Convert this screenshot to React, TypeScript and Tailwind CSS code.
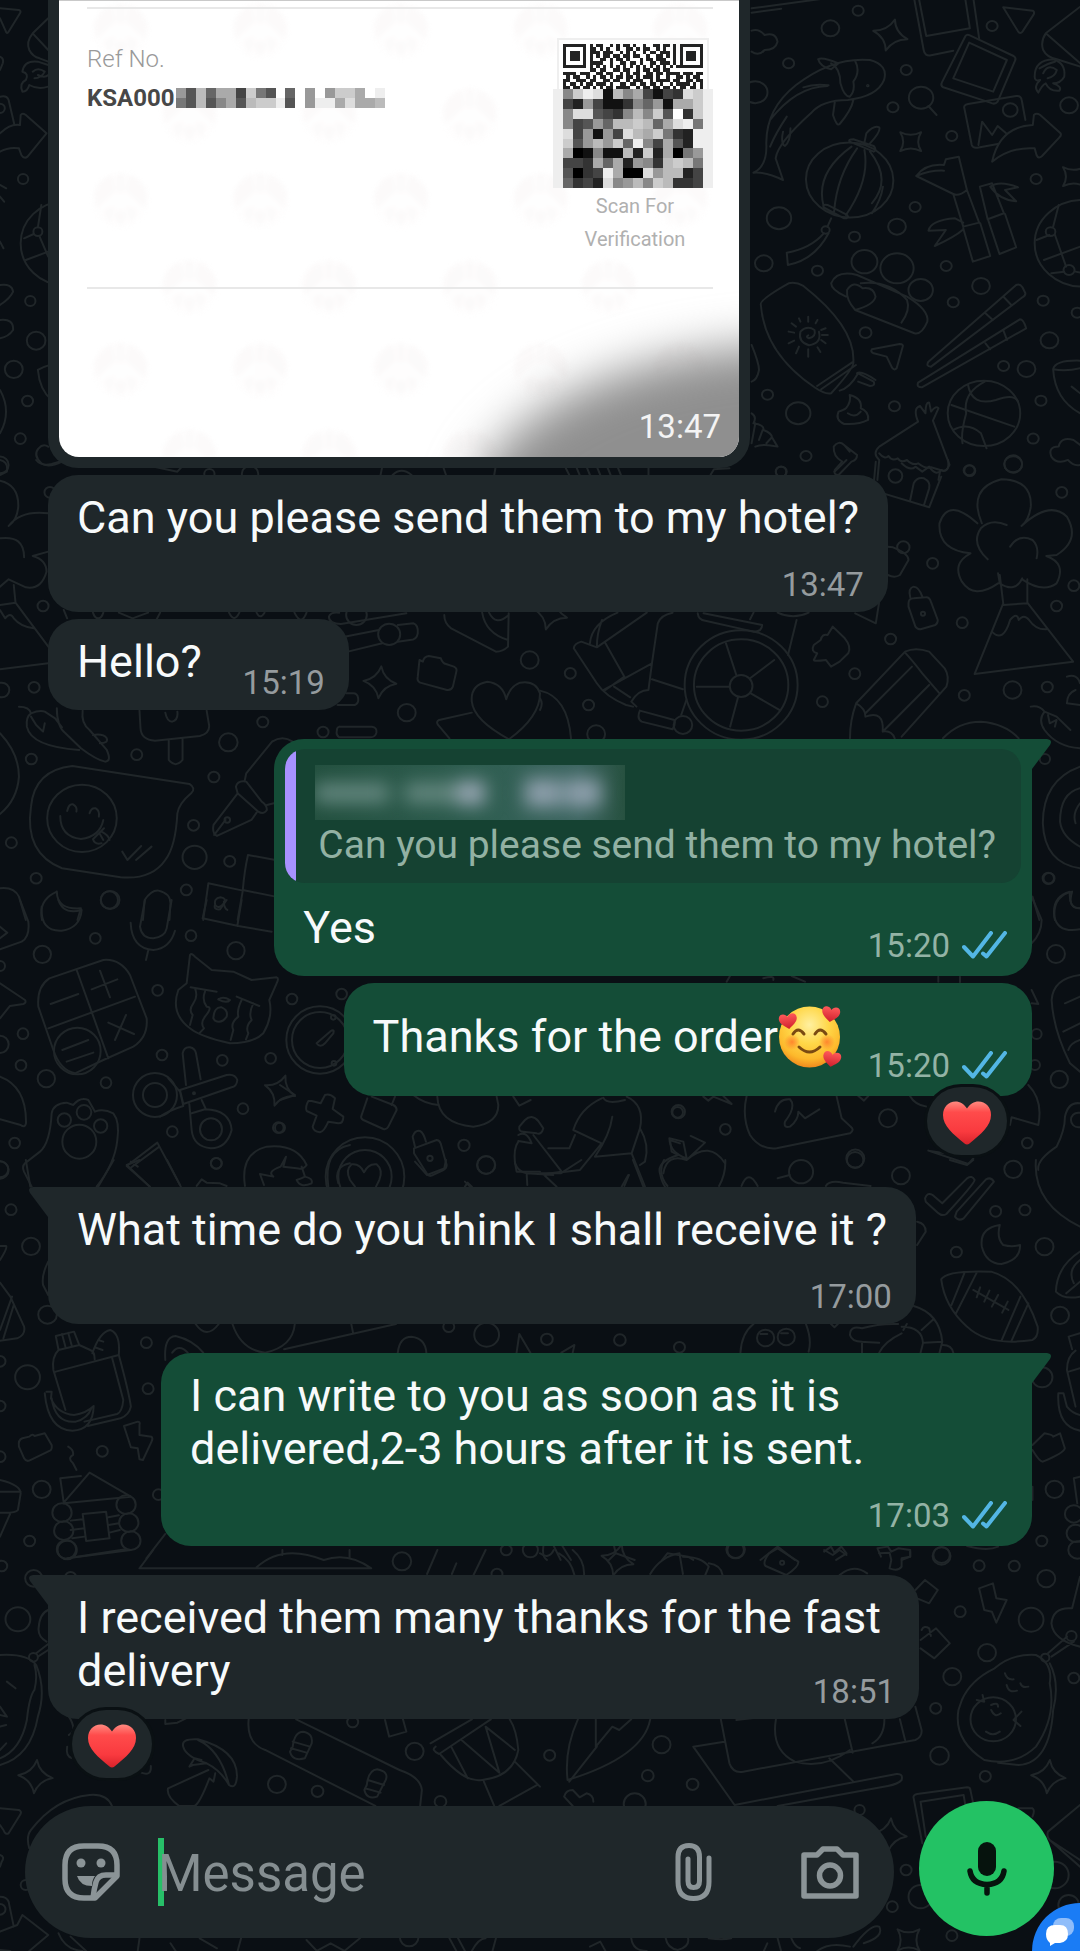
import { type ReactNode } from "react";

/* ------------------------------------------------------------------ */
/* Wallpaper                                                           */
/* ------------------------------------------------------------------ */

type Patch = {
  at: [number, number];
  scale: [number, number];
  circles: [number, number, number][];
  stars?: [number, number, number, number][];
  paths: string[];
};

const PATCHES: Patch[] = [
  {
    at: [0, 0],
    scale: [0.3444, 0.3333],
    circles: [
      [0, 325, 14], [67, 537, 15], [88, 903, 15], [105, 1022, 27], [40, 1108, 26], [80, 1203, 16],
      [59, 1316, 16], [185, 730, 125], [110, 695, 13], [0, 1395, 25],
    ],
    paths: [
      "M0 25L55 30Q62 32 58 40L25 95Q20 105 16 92L0 55",
      "M140 55L95 100L140 150M95 100Q75 125 85 150Q95 170 115 175L140 185",
      "M65 215Q70 180 110 185L140 195M65 215Q85 220 75 240Q55 250 65 275Q80 275 85 255Q110 270 140 260M95 215Q110 200 130 215Q120 235 100 235M110 225Q130 235 140 225",
      "M0 400Q30 370 58 375L60 345Q65 338 75 345L135 400L80 470Q70 478 62 465L55 445Q25 440 0 455",
      "M0 290Q20 285 25 300L42 375M0 170Q12 175 8 190L0 210M0 555L18 565M0 590L12 605M0 725L10 745",
      "M110 682L120 615M98 702L70 715M75 780L140 755M115 710L140 770",
      "M0 855Q35 850 38 875Q30 895 0 915M0 960Q40 955 38 990Q25 1010 0 1015",
      "M110 1110Q140 1090 200 1085M110 1110Q115 1170 150 1200M0 1170Q35 1235 0 1300",
      "M120 1390Q95 1365 112 1345Q125 1330 140 1340M120 1390Q140 1405 180 1385",
    ],
  },
  {
    at: [500, 0],
    scale: [0.37, 0.3333],
    circles: [
      [968, 32, 15], [893, 85, 24], [780, 190, 15], [1098, 210, 15], [1330, 78, 15], [1062, 322, 15],
      [1221, 408, 15], [1538, 316, 24], [1449, 537, 15], [754, 655, 33], [1122, 621, 15], [1073, 680, 24],
      [958, 710, 15], [713, 790, 24], [858, 812, 15], [1206, 798, 15], [985, 785, 35], [1073, 805, 45],
      [1137, 870, 33], [1300, 858, 24], [1225, 907, 15], [1468, 902, 15], [1560, 938, 15], [988, 998, 16],
      [1485, 1021, 24], [1361, 1098, 15], [1423, 1107, 24], [723, 1184, 15], [806, 1240, 33],
      [1066, 1219, 15], [1462, 1202, 15], [1441, 1316, 15], [827, 1368, 15], [1387, 1393, 24],
      [1268, 1411, 15], [760, 1415, 15], [690, 277, 33], [1138, 293, 33], [1379, 330, 20],
      [1308, 1240, 98], [1575, 730, 130], [1488, 695, 13], [1538, 810, 15], [880, 690, 11], [994, 257, 2],
    ],
    stars: [[1055, 105, 48, 15], [1110, 425, 40, 45], [1550, 530, 40, 45]],
    paths: [
      "M680 25L880 -5M680 38L760 26",
      "M680 92Q700 85 715 105Q745 95 750 125Q745 150 715 150Q700 170 680 155",
      "M1120 0L1145 150Q1148 170 1165 166L1225 152M1280 0L1295 115M1133 0L1152 108L1270 85L1258 0",
      "M1258 108Q1262 102 1270 106L1388 168Q1396 174 1392 182L1345 305Q1338 315 1325 308L1198 262Q1190 256 1194 248ZM1268 128L1370 180L1333 275L1225 235Z",
      "M1360 22L1440 32Q1446 36 1442 44L1412 95Q1406 104 1400 94Z",
      "M1568 20L1475 100Q1460 125 1468 150Q1478 172 1505 178L1568 200M1475 100L1568 190",
      "M1445 230Q1445 180 1495 178Q1530 190 1525 230Q1515 250 1495 250Q1520 260 1512 272Q1485 275 1475 250Q1465 255 1455 278Q1440 260 1460 240Q1445 245 1445 230M1468 220Q1480 190 1505 210Q1500 230 1480 235M1458 205Q1480 190 1500 185",
      "M685 518Q720 500 720 440Q715 330 800 255Q900 170 1000 180Q1050 195 1038 240Q1020 290 940 300Q870 300 840 340Q750 430 745 475L765 540Q720 515 685 518ZM860 178Q870 170 915 190L895 208Q865 200 860 178M895 190Q920 205 920 250Q930 290 945 290Q960 275 955 245Q975 215 960 183M730 360Q800 260 885 258M820 262Q850 250 888 256M775 350Q745 400 730 440M905 305L900 345Q910 380 918 372Q950 330 955 300M765 395Q758 430 770 438Q785 425 785 385",
      "M1158 318L1180 345",
      "M1255 325Q1252 315 1265 312L1395 288Q1408 286 1410 300L1420 360M1255 325L1275 435Q1278 445 1290 443L1345 432M1293 435L1303 365L1330 405L1345 378L1368 400",
      "M1330 485Q1350 380 1440 375L1443 345Q1450 338 1460 345L1515 400Q1518 406 1512 412L1465 468Q1455 478 1450 465L1445 445Q1380 440 1330 485Z",
      "M945 540m-118 0a118 112 10 1 0 236 0a118 112 10 1 0 -236 0M950 440Q850 520 875 620M965 445Q910 530 903 635M985 450Q1000 540 935 645M1000 455Q1060 540 1005 610M1005 640Q1030 600 1035 560M945 425L1010 455Q1020 450 1010 438L955 418Q940 418 945 425M875 622L930 655Q945 655 938 645L885 615Q870 612 875 622M985 428L990 400Q1010 375 1025 382Q1030 395 1000 430M895 655L885 680M875 700Q840 745 775 758L778 795Q850 780 888 700",
      "M1125 528Q1150 490 1200 495L1205 478L1240 470L1262 570Q1240 590 1225 582ZM1125 528Q1165 510 1200 512M1225 582L1252 680L1295 668L1262 570M1252 685L1278 785L1325 768L1298 670M1252 668L1230 655Q1165 660 1158 692L1205 690L1175 738Q1230 710 1250 690M1297 560L1330 550L1362 640L1318 658ZM1320 662L1350 762L1395 742L1365 642M1325 560Q1350 540 1400 562L1365 570L1395 604Q1350 600 1325 560",
      "M895 850Q910 810 965 825L1100 890Q1160 930 1155 965Q1140 1005 1120 1000L960 930M895 850Q895 870 935 890M960 930Q935 900 938 870Q955 840 980 865Q1010 860 1015 890Q1010 915 960 930M1100 900Q1110 930 1085 968M975 850Q1050 840 1100 900",
      "M705 915Q700 900 780 850Q800 845 820 858Q960 980 955 1085Q960 1100 895 1180Q880 1185 850 1162Q715 1060 705 915ZM857 1158L955 1085M868 1168L962 1095M918 1172Q945 1165 968 1120L1010 1145Q1015 1158 1000 1158L968 1145M965 1120Q975 1110 1015 1140",
      "M833 1006Q825 1010 835 1015Q855 1010 850 990Q830 975 812 995Q805 1025 835 1036Q870 1030 862 995M833 950L833 965M858 960L853 970M880 985L868 990M870 1005L886 1005M868 1020L880 1030M858 1042L866 1056M833 1048L833 1070M808 1040L800 1060M795 1022L780 1030M780 995L795 998M788 970L800 980M808 955L812 965",
      "M1395 855Q1405 850 1412 862L1420 880Q1420 888 1412 892L1165 1100Q1150 1100 1158 1085ZM1312 940L1332 960M1362 892L1382 915M1405 958Q1415 958 1422 985L1140 1162Q1125 1162 1130 1148ZM1312 1030L1325 1048M1360 990L1370 1020",
      "M1005 1048L1080 1032Q1092 1032 1088 1042L1072 1105Q1066 1112 1060 1104L1045 1070L1010 1060Q1000 1055 1005 1048Z",
      "M1265 1155Q1275 1220 1340 1200Q1390 1180 1400 1205M1220 1215L1390 1280M1310 1145Q1250 1180 1260 1240Q1245 1300 1250 1330M1225 1290Q1265 1265 1300 1300L1315 1345",
      "M945 1185Q980 1195 975 1225Q998 1235 995 1260Q970 1275 930 1272Q905 1260 915 1235Q930 1230 935 1225Q950 1205 945 1185M975 1235Q960 1255 940 1240",
      "M1020 1440L1025 1380Q1005 1360 1025 1340L1130 1265Q1115 1225 1135 1218L1150 1240Q1150 1205 1160 1208L1165 1235Q1180 1215 1185 1225L1170 1262L1215 1395Q1205 1420 1190 1410L1185 1440M1025 1360Q1040 1380 1050 1368Q1060 1385 1075 1375Q1085 1390 1100 1380Q1115 1398 1130 1390Q1150 1408 1165 1402L1190 1410",
      "M1450 720L1485 705M1495 680L1510 615M1500 705L1530 800M1470 780L1568 740M1490 820L1525 815M1555 815L1568 818",
      "M1495 1108Q1500 1080 1568 1082M1495 1108Q1500 1200 1568 1240M1495 1108Q1530 1115 1568 1105M1545 1160L1568 1180",
      "M1490 1370Q1480 1340 1510 1340Q1515 1310 1550 1320L1568 1335M1490 1370Q1505 1395 1535 1380Q1550 1400 1568 1395",
      "M680 1240Q695 1250 685 1270Q715 1275 712 1290Q735 1300 735 1312L750 1340Q710 1330 690 1340M690 1270L680 1330M710 1290L700 1320M735 1312L720 1330M680 1035Q700 1090 700 1110Q695 1140 680 1145",
      "M902 1340Q915 1320 930 1335L965 1365Q965 1380 950 1385L915 1425Q900 1425 905 1410L925 1385Q900 1370 902 1340M930 1335L945 1355",
    ],
  },
  {
    at: [0, 460],
    scale: [0.3444, 0.3333],
    circles: [
      [145, 97, 16], [125, 438, 16], [5, 690, 22], [99, 682, 16], [1130, 523, 32], [1035, 465, 30],
      [1181, 758, 26], [1538, 600, 26], [763, 786, 16], [663, 847, 27], [938, 816, 16], [397, 884, 16],
      [91, 897, 16], [621, 951, 16], [562, 1096, 16], [33, 1148, 16], [565, 1192, 35], [667, 1204, 16],
      [105, 1255, 16], [320, 1320, 27], [541, 1290, 16], [238, 1075, 101], [608, 42, 15], [726, 42, 24], [660, 1080, 8],
    ],
    stars: [[1103, 667, 48, 5]],
    paths: [
      "M0 0Q25 5 20 35L0 45M105 0Q120 20 150 12L190 0M380 5L515 35L530 18M1110 20L1105 45M1140 45Q1165 20 1195 45M1285 15L1295 45M1440 15L1435 45",
      "M0 62Q55 75 53 140Q50 180 25 198M25 198Q60 150 140 160M0 235Q70 225 70 292M95 288Q135 300 135 335Q120 390 75 382L25 358L0 380M95 288L140 275M40 375L45 428L155 580M45 428L0 435M0 450L15 475Q30 455 40 475Q60 500 98 505",
      "M0 628L140 610M185 450L195 475M270 458Q275 475 285 475Q295 475 300 458M345 458L385 475L430 458M465 458L455 478M665 458Q680 490 695 458M745 458Q755 480 768 458M855 458Q875 500 890 458",
      "M955 470Q960 455 985 458M955 470Q955 490 990 492L1180 460M1000 530L1100 510M1010 575L1110 550M1155 495L1200 490Q1215 495 1213 520Q1210 540 1190 540L1155 545",
      "M1290 465Q1290 490 1310 505L1440 575Q1460 575 1475 560L1477 460M1400 458Q1410 520 1475 540M1420 458Q1440 500 1477 465",
      "M1218 600L1228 605Q1230 590 1245 588L1280 595Q1285 610 1295 612L1318 620Q1328 625 1325 635L1315 680Q1310 692 1298 690L1220 668Q1210 662 1213 650Z",
      "M1470 718Q1460 670 1415 665Q1365 675 1370 725Q1375 780 1478 838Q1568 770 1568 700Q1555 660 1510 668Q1480 680 1470 718ZM1370 758L1275 780Q1265 785 1272 795L1305 835",
      "M980 735L1030 735Q1042 730 1040 715Q1038 700 1025 700L1005 700M985 800L1080 800Q1095 802 1093 818Q1090 832 1075 832L985 832Q975 825 978 812Q978 802 985 800",
      "M240 752Q235 790 260 810L310 870Q325 905 305 905Q280 900 235 865L190 820Q165 800 165 745M55 740Q85 740 90 760Q75 770 78 800Q90 860 230 870M90 760Q115 750 130 755L160 775L180 802M105 795L125 815L130 790M90 770L105 795M270 825Q300 820 310 835Q315 850 290 850",
      "M405 752L408 805Q410 840 450 842L580 828Q610 820 607 795L600 752M480 758Q485 785 500 785Q518 780 515 755M490 842L490 900Q510 925 530 900L530 838",
      "M90 1040Q100 930 210 918L550 972Q570 985 555 1000Q520 1030 515 1060Q510 1160 480 1200Q440 1260 350 1252L180 1225Q70 1180 90 1040ZM175 1068Q175 1130 235 1137Q290 1130 300 1080M195 1053Q200 1030 212 1033Q225 1040 222 1055M260 1060Q265 1042 278 1045Q290 1052 287 1070M270 1138L302 1105M270 1138Q275 1155 295 1150M295 1115Q315 1125 318 1140M290 1122L300 1140M355 1175L370 1200L410 1158M395 1200L440 1160",
      "M790 845Q820 825 850 845M790 845L715 940L710 965M715 965Q690 960 685 980L690 1000L750 1055Q765 1065 775 1050Q775 1035 760 1025ZM690 1000L620 1095Q615 1120 630 1128L730 1080L745 1058M655 1080L622 1125M775 1035L795 1030",
      "M800 1200L720 1185Q710 1230 705 1290L800 1310M605 1270L705 1292L690 1380M605 1270L590 1380M625 1335Q620 1315 640 1312Q660 1315 650 1330Q635 1350 625 1335M650 1325Q650 1345 660 1350",
      "M0 820Q55 880 55 950Q50 1020 0 1062M0 1285Q40 1280 55 1310L75 1380M165 1295Q165 1350 235 1345L225 1380M165 1295Q110 1320 122 1380M415 1380L420 1320Q440 1290 460 1292Q495 1300 495 1330L492 1380",
    ],
  },
  {
    at: [540, 460],
    scale: [0.3444, 0.3333],
    circles: [
      [1032, 48, 20], [1248, 32, 16], [1374, 12, 26], [1515, 97, 16], [1140, 310, 16], [1226, 488, 16],
      [1500, 438, 16], [1550, 377, 16], [1018, 537, 16], [914, 641, 16], [1232, 706, 16], [1372, 690, 26],
      [1473, 681, 16], [820, 725, 16], [141, 735, 16], [88, 640, 16], [163, 822, 26], [1112, 461, 6],
      [584, 675, 164], [584, 675, 137], [584, 678, 33], [415, 795, 27], [1055, 262, 18], [700, 35, 15],
      [1466, 897, 15], [1478, 1255, 16],
    ],
    stars: [[30, 460, 50, 15]],
    paths: [
      "M975 5L970 60M970 92L1130 142L1165 50M1075 120L1085 70Q1095 50 1115 55Q1135 65 1130 85L1115 135M855 35L890 0M1050 10Q1075 35 1090 20L1110 35L1130 20Q1150 50 1165 30Q1190 40 1185 0",
      "M495 45L505 28L550 25M75 25L85 45M105 20L115 45M135 20L145 45M165 20L175 45M195 20L205 45M225 20L235 45M315 20V45",
      "M1270 190Q1185 110 1160 190Q1155 270 1250 280Q1195 310 1225 365Q1260 420 1330 370M1283 190Q1240 85 1340 58Q1430 60 1425 140Q1420 180 1398 198Q1480 120 1530 170Q1570 240 1500 285L1470 288Q1530 310 1500 370Q1460 400 1400 358M1300 298Q1250 250 1280 205Q1310 175 1355 195M1365 260Q1390 220 1430 240Q1450 260 1442 295M1335 345L1345 430L1262 642L1548 605L1415 428V358M1330 340L1335 370Q1380 400 1400 355M1345 435L1415 430M1312 515Q1345 550 1365 480Q1385 455 1390 480Q1405 460 1420 480Q1440 510 1470 508",
      "M1010 260L1025 262Q1070 280 1070 300L1045 345Q1030 355 1010 345M1070 430Q1070 415 1085 415L1120 412Q1130 410 1135 425L1155 480Q1155 490 1148 495L1105 508Q1095 508 1090 500L1070 440ZM1075 412Q1068 385 1085 380Q1100 380 1110 410",
      "M915 460L975 490L985 425",
      "M795 555L815 540Q820 520 835 525L850 500L885 535Q905 560 895 580L870 605L845 620L830 600Q795 605 795 600L805 580Q785 575 795 555",
      "M918 730L1060 575Q1090 560 1130 575L1175 625Q1190 650 1180 680L1050 830M1060 578Q1080 600 1110 640L1160 700M945 760L1080 620M1000 810L1130 675M918 730Q900 780 900 835M918 730Q945 745 945 770Q1000 750 995 815Q1020 810 1030 835",
      "M225 458Q150 490 145 550M310 458L165 562L120 545Q100 550 98 565L165 670Q190 710 250 735L270 740M180 480Q165 520 165 562M190 550L245 650M185 690L325 610M245 650L190 690M385 458Q350 465 342 490L325 610L315 690Q285 690 265 725L280 740M325 658L415 688M425 720L410 765M290 752L390 780Q395 790 385 808L295 785Q280 775 290 752M215 680L262 712M458 460Q460 480 480 482L620 515Q645 515 645 495L475 460M620 458L610 478M745 480L720 585M690 458Q735 480 780 458",
      "M540 550L570 645M680 600L610 655M455 680H550M575 712L552 800M612 700L695 750",
      "M0 692Q80 710 90 835M0 715Q10 730 0 750M1170 835Q1215 785 1280 785Q1350 790 1390 835",
      "M1425 740Q1450 735 1465 755L1500 770L1540 810M1465 755Q1445 780 1465 810Q1500 860 1568 865M1475 765L1480 790L1500 780L1495 800M1530 650Q1560 640 1568 670M1530 730Q1530 700 1555 690M1530 730L1568 735",
      "M1568 920Q1460 960 1460 1090Q1465 1210 1568 1225M1568 985Q1510 1000 1510 1085Q1515 1130 1568 1160M1568 1030Q1545 1060 1555 1090M1495 1380Q1485 1310 1545 1295Q1530 1345 1568 1345M1430 1310L1450 1380",
    ],
  },
  {
    at: [0, 900],
    scale: [0.3333, 0.3333],
    circles: [
      [0, 198, 15], [127, 163, 26], [286, 115, 16], [573, 107, 16], [708, 152, 26], [473, 271, 16],
      [876, 297, 16], [1025, 282, 16], [69, 401, 16], [63, 496, 16], [0, 433, 26], [139, 536, 26],
      [318, 548, 16], [486, 465, 16], [667, 481, 16], [812, 475, 16], [729, 626, 16], [835, 683, 16],
      [517, 695, 16], [649, 790, 16], [44, 729, 16], [0, 810, 26], [328, 0, 26], [232, 453, 70],
      [193, 660, 20], [252, 637, 22], [302, 678, 20], [238, 725, 51], [465, 585, 66], [465, 585, 36],
      [633, 688, 33], [582, 580, 3], [960, 420, 101], [960, 420, 84], [1000, 352, 7], [1002, 490, 7],
    ],
    stars: [[840, 572, 48, 20]],
    paths: [
      "M60 0L85 65Q90 110 65 125L0 148M0 80L22 98L0 115M125 20Q120 95 185 92Q240 85 245 30Q190 45 175 0",
      "M435 0L420 80Q425 115 460 115Q495 110 500 85L515 0M392 68Q395 145 460 150Q510 145 525 92M445 150L438 180",
      "M620 0L608 55L715 78L815 95M725 0L712 78M645 15Q640 30 660 28L680 0",
      "M148 235L310 180Q360 175 390 225L440 355Q445 410 400 440L310 480L225 520Q180 510 160 450L115 320Q110 260 148 235ZM230 210L325 475M145 385L405 290M152 312L235 282M275 268L352 238M300 212L330 292M325 368L402 402M378 345L345 420M187 450L265 420M200 485L280 458",
      "M535 270L560 250L570 165Q575 158 585 170L635 210L700 215L755 240L830 232Q838 235 830 250L808 300Q820 350 790 400Q760 430 690 430Q600 410 570 385Q510 340 535 270ZM572 262L650 275M585 265Q595 290 580 310Q565 330 578 345L570 375M615 275Q605 300 620 320Q640 320 615 350Q600 370 612 385L600 398M710 290L778 318M725 300Q710 330 715 350Q690 370 700 390L692 420M760 310Q745 340 755 360Q735 380 745 400L738 418M655 298Q670 288 690 300Q680 312 655 298M640 355Q642 320 665 322Q685 330 680 350Q665 372 645 362Z",
      "M0 250L75 300Q80 308 70 312L30 318L0 355M0 530Q80 560 78 670Q75 685 62 675L0 658",
      "M558 555L548 460Q552 440 570 442Q585 445 588 460L602 538M540 570L680 525Q705 520 712 540Q710 560 695 562L550 612ZM505 535L540 575L550 618Q510 630 480 650M575 640L615 628Q690 630 695 690Q680 745 633 745Q580 740 575 690L568 612M605 600L618 628",
      "M950 430L990 395Q1005 385 1000 400L975 430Q960 445 950 430",
      "M155 640Q160 610 200 608L220 615Q240 590 265 600L285 635Q310 625 340 640Q360 665 352 720Q345 790 290 860M155 640Q150 730 120 755L75 790Q65 800 72 815L95 860",
      "M380 798L472 728L540 855M380 798L450 860M390 805L478 740M590 858L605 838L620 848L660 850L680 858",
      "M735 858Q720 760 800 740Q890 730 920 795Q910 810 890 805L850 800L858 770L842 800Q800 815 820 830L780 822L792 855M905 800L915 830Q940 835 935 850Q900 865 890 840Q905 835 915 830",
      "M1050 735Q970 750 985 860M1050 790Q1000 800 1015 850",
    ],
  },
  {
    at: [280, 1085],
    scale: [0.3333, 0.3333],
    circles: [
      [0, 128, 15], [552, 181, 17], [618, 240, 27], [255, 275, 118], [255, 275, 80], [450, 220, 8], [1195, 80, 20],
    ],
    paths: [
      "M0 0L45 30L0 45M85 48Q75 65 80 78L110 92L98 125Q100 140 120 142Q132 140 145 110L175 115Q190 115 190 95L158 72L165 40Q150 25 135 30L122 55L95 48Z",
      "M262 40L245 90Q240 100 250 105L310 132Q320 135 325 125L350 75Q350 65 340 60L275 35M335 60L345 35M400 30Q430 55 475 60",
      "M472 35Q475 115 580 125Q655 115 655 60L650 35M700 35L718 62L752 45",
      "M402 190L470 165Q478 165 482 175L500 240Q500 250 490 255L455 272Q445 275 440 265L402 205ZM405 185L398 155Q405 135 420 138Q430 142 438 170",
      "M252 262Q240 235 215 238Q195 255 210 285L225 305M252 262Q265 235 290 238Q310 255 298 285L288 305",
      "M718 125L735 105Q755 85 775 108L790 130Q785 150 770 145L730 140Q715 140 718 125M715 150Q740 135 755 175L715 168M715 170Q700 190 705 235Q715 260 740 265L820 270M760 150L845 260L790 268L830 305M740 265L742 300M805 190H868L885 150M965 40Q900 70 880 135L965 175L900 255L845 262M997 95Q990 150 945 215L1055 205L1095 305M1040 35Q1095 60 1080 130Q1060 190 1055 205M1080 130Q1110 180 1095 230L1080 240M970 38Q980 60 1035 45M1045 270L1025 305",
      "M1170 165L1200 175M1170 165L1175 200L1195 210Q1130 230 1140 265Q1145 290 1155 305M555 290L570 305",
    ],
  },
  {
    at: [660, 730],
    scale: [0.3333, 0.3333],
    circles: [
      [1165, 445, 17], [1188, 672, 27], [1130, 912, 15], [1125, 1005, 15], [1198, 1048, 26], [53, 1147, 16],
      [196, 1198, 16], [684, 1165, 27], [1102, 1239, 16], [586, 1286, 27], [1255, 1170, 22],
    ],
    paths: [
      "M1230 485Q1175 500 1183 560Q1195 610 1260 598M1230 485Q1225 535 1260 535M1115 500L1145 570Q1145 610 1115 640",
      "M1115 780L1135 822L1115 820M1260 735Q1180 745 1175 810Q1180 900 1230 1000L1260 1025M1215 820L1260 800M1210 905L1260 880M1225 960Q1230 940 1260 930",
      "M260 1098Q245 1160 270 1215Q300 1260 350 1255L570 1210Q585 1200 572 1190L545 1165L530 1100M345 1145Q355 1105 390 1108Q410 1130 375 1175Q370 1195 390 1190Q415 1170 415 1145L435 1165L478 1138M130 1100L145 1112L160 1100L215 1122L190 1098M595 1098L612 1112L625 1098",
      "M28 1225L70 1235L80 1285Q30 1270 28 1225ZM92 1218L135 1238L80 1290M80 1290Q150 1230 195 1300M80 1290Q20 1270 10 1330M750 1098Q765 1125 800 1130",
      "M1105 1065Q1150 1110 1135 1185L1055 1162L1050 1185M805 1262L925 1302L940 1285M805 1262L855 1270",
      "M1260 1120Q1225 1115 1215 1160Q1215 1200 1190 1250Q1130 1290 1135 1320M200 755L210 738M310 745Q345 735 340 750M395 738L435 755M835 755V740M900 740V757",
    ],
  },
  {
    at: [0, 1160],
    scale: [0.3444, 0.3333],
    circles: [
      [0, 28, 24], [628, 10, 16], [1412, 15, 26], [32, 149, 16], [90, 259, 26], [138, 464, 27], [425, 548, 16],
      [80, 652, 36], [430, 686, 16], [0, 604, 16], [0, 738, 16], [0, 890, 16], [297, 874, 16], [121, 988, 26],
      [86, 1143, 16], [460, 1004, 16], [1413, 524, 36], [1303, 500, 16], [180, 1058, 28], [366, 1034, 28],
      [185, 1112, 28], [374, 1088, 28], [193, 1168, 28], [380, 1142, 28],
    ],
    paths: [
      "M75 0L88 80M330 0L285 80M405 0L368 15L435 80M485 0L525 80M380 5L400 20M1205 5L1240 45L1290 25L1295 0M1495 5L1500 35L1568 35M1350 80L1358 68L1370 80",
      "M0 258H18Q22 265 0 300M140 305Q120 345 125 375L140 405M0 368L30 410L70 500Q75 525 50 535L0 542M35 410L0 510M40 435L10 535",
      "M675 492Q700 570 770 578Q850 560 856 492M825 568L1150 492M1020 492L1025 518M568 492Q600 540 635 492M1155 578Q1160 530 1195 530Q1235 535 1238 578M1500 578L1508 522L1540 578M480 600Q475 530 510 528Q560 540 590 578M500 578Q520 550 545 578",
      "M162 528L215 515L230 555L170 570ZM180 522L190 560M198 518L208 556M170 570Q150 590 155 630L190 750M230 555L262 570Q275 575 275 598M162 635L345 585Q375 700 380 740Q375 765 350 775L255 798M325 592Q350 690 358 720Q355 755 340 762L245 785M268 580Q290 515 320 510Q350 520 345 585M285 540L300 545M275 562L298 570",
      "M135 695H150L148 715Q165 760 215 765Q250 760 272 738Q270 810 210 812Q140 810 130 700M150 715Q160 790 220 785Q255 775 265 745",
      "M65 835L85 830Q95 820 100 828L130 820L150 855Q152 868 145 872L85 902Q75 905 70 895L55 860Q52 840 65 835M360 798L400 785Q408 785 405 795V825L440 830Q445 835 440 845L415 900L405 898L400 865L380 862Z",
      "M198 860Q215 870 212 885Q195 895 212 910L222 930M175 955L235 948M175 955L185 1028L260 938L380 1010L185 1030M205 1082L240 1078M210 1135L245 1130M315 1072L345 1066M318 1118L348 1110M240 1062L308 1055L318 1135L250 1143ZM205 1110L245 1105M215 1192L365 1168M315 1095L345 1090",
      "M0 960Q60 975 60 1000L52 1050Q45 1060 0 1058M0 995H60M30 1060L0 1130M480 1122L425 1195",
    ],
  },
  {
    at: [540, 1160],
    scale: [0.3444, 0.3333],
    circles: [
      [758, 35, 35], [915, 0, 24], [1048, 47, 26], [1374, 28, 26], [1323, 154, 16], [1408, 150, 16],
      [1209, 276, 16], [1465, 260, 26], [1510, 466, 26], [655, 534, 25], [715, 531, 25], [20, 538, 17],
      [232, 540, 17], [405, 562, 16], [1458, 652, 30], [1494, 988, 26], [1457, 1143, 16], [1550, 1062, 26],
      [1555, 1120, 26], [1560, 1170, 26], [568, 1168, 27], [1166, 1185, 24],
    ],
    paths: [
      "M0 40H60L120 0M270 0L300 80M360 0Q340 40 370 78M538 0Q540 40 520 78M245 78L258 45M585 78Q605 25 632 78M690 55L725 45M830 78Q840 60 880 68L960 78M1190 0L1240 15L1258 0",
      "M1118 115Q1125 95 1140 105L1168 130L1240 55Q1255 45 1262 60Q1262 70 1180 162Q1168 170 1155 158L1120 125ZM1210 155L1295 58Q1310 50 1318 65L1230 175Q1215 185 1205 170Z",
      "M1335 195Q1275 205 1283 260Q1295 310 1340 312Q1395 300 1394 255Q1370 262 1345 255Q1325 235 1335 195M1095 185Q1120 190 1120 215L1095 255M1440 0Q1430 130 1568 200",
      "M1165 358Q1180 330 1310 335Q1400 360 1445 500Q1448 530 1430 540Q1300 560 1240 500Q1175 440 1165 358ZM1232 340L1195 435M1268 338L1208 460M1395 410L1340 542M1418 430L1368 545M1258 390L1360 450M1278 382L1268 412M1305 392L1290 425M1330 405L1312 440M1358 425L1342 458",
      "M1568 275Q1500 320 1498 395Q1520 420 1568 410M1568 300Q1530 330 1550 370M1528 400L1568 365",
      "M582 578Q585 520 620 492M772 492Q790 540 780 575M640 522H660M700 520H720M845 492L855 502L865 492M935 505Q900 495 900 525Q905 545 935 545M1085 438Q1160 460 1168 545L1160 578M935 505Q985 490 1040 492M935 545V578M1050 500Q1110 500 1112 550L1105 578M1065 492L1055 510M1140 480L1108 510M1168 545L1115 548M985 578Q1000 545 1050 520M930 545L985 548M1170 555Q1195 555 1200 578M62 578L100 555L95 578",
      "M1430 855L1465 820Q1490 825 1490 830L1510 820L1524 865Q1520 880 1460 905Q1450 905 1430 870M1535 530L1568 520M1535 530L1545 568M1555 572Q1530 590 1530 630L1555 740M1535 635L1568 625M1505 700H1520L1530 740Q1545 760 1568 765M1505 700Q1500 800 1568 812M1550 955L1568 950M1550 955L1560 1030M1430 980V1020",
      "M10 1158Q5 1190 20 1200M40 1158L60 1200M65 1158L90 1200M215 1158L220 1180L200 1200M220 1180L275 1200M355 1200L370 1180L430 1190L445 1200M640 1200L690 1160L740 1200M825 1175L845 1160L855 1178L875 1160L890 1180L860 1200M980 1165L1010 1160L1020 1175L1040 1165L1075 1170V1190L1050 1200M980 1165L990 1190M1240 1158Q1300 1175 1330 1160",
    ],
  },
  {
    at: [0, 1550],
    scale: [0.3444, 0.3333],
    circles: [
      [5, 48, 16], [98, 85, 25], [52, 208, 36], [205, 82, 16], [195, 0, 28], [1167, 34, 27], [1443, 72, 16],
      [1470, 0, 16], [1540, 0, 22], [804, 703, 26], [922, 724, 17], [1024, 516, 16], [1204, 604, 26],
      [1279, 755, 17], [97, 322, 13], [0, 1078, 16], [75, 1005, 15], [1188, 1162, 27],
    ],
    stars: [[103, 680, 50, 5]],
    paths: [
      "M445 0L405 55H1078Q1010 5 940 30Q820 -20 745 52M195 25L380 0M820 0V15M1015 0V25M1270 0L1240 72M1325 40L1312 72M1410 0L1375 75",
      "M140 180Q115 190 112 235Q110 260 135 275M105 310L140 282M110 320L140 300M0 315Q80 310 105 345Q135 420 110 500Q90 620 0 645M0 625Q60 600 78 510Q85 440 100 420Q110 380 100 345M20 395L45 415M0 470L20 500L0 495M0 530L18 525M0 600L18 580",
      "M200 500Q225 540 200 555M195 590Q190 620 210 625M410 668Q440 680 438 648M480 510V522L515 518L540 505",
      "M532 590Q525 565 575 568Q690 600 688 680Q685 720 665 705Q640 660 600 640Q540 620 532 590ZM575 570Q640 600 665 705M600 640L560 645L550 650L565 625L585 630M605 660L488 715Q482 740 520 768L565 768Q580 760 608 685L620 695L625 670",
      "M722 508Q715 580 770 600L1090 768M860 508L1160 660Q1220 680 1225 720L1220 768M850 590Q855 545 880 545Q910 550 905 580L885 625Q850 635 842 605ZM850 575L900 590M845 595L890 608M1065 705Q1070 660 1095 658Q1130 665 1120 690L1095 740Q1065 750 1058 720ZM1068 690L1115 705M1060 715L1105 728",
      "M1118 510L1130 560L1180 545L1170 508M1250 580L1370 508M1265 590Q1250 600 1275 612L1425 508M1280 615Q1350 700 1400 690Q1490 680 1505 600Q1500 540 1480 508M1310 590L1358 685M1340 570L1450 668L1410 530L1495 600M1405 695L1435 768M1495 635L1568 710M1450 768L1560 705",
      "M325 768Q310 730 260 735Q160 745 90 840Q75 860 85 895M0 775L55 780Q65 785 58 795L25 850Q15 855 10 840L0 825M0 915Q15 920 5 935L0 950M0 1040Q20 1040 25 1055L40 1130M0 1145L50 1125L65 1095L140 1155L85 1203M0 1200L30 1203",
      "M170 1150Q190 1200 240 1203M205 1160L250 1203M405 1165L400 1203M700 1165L690 1203M495 1180L510 1203M580 1165L630 1195M890 1170L920 1203L960 1180L1000 1203L1045 1165M1305 1165L1325 1203M1330 1165L1350 1203M1440 1165L1430 1203M1370 1203Q1390 1165 1410 1165",
    ],
  },
  {
    at: [540, 1550],
    scale: [0.3444, 0.3333],
    circles: [
      [568, 0, 24], [703, 38, 6], [1166, 18, 26], [1275, 47, 16], [1377, 48, 16], [1470, 86, 26], [1220, 185, 16],
      [1426, 209, 36], [1298, 308, 26], [1197, 380, 26], [1149, 475, 16], [1160, 617, 27], [1293, 679, 16],
      [1550, 384, 16], [1316, 508, 66], [28, 616, 16], [353, 584, 26], [313, 677, 17], [443, 703, 17],
      [275, 762, 32], [928, 780, 15], [1063, 960, 16], [1105, 1040, 35], [1023, 1070, 16], [1196, 1157, 16],
      [1467, 323, 12], [1543, 258, 15], [1535, 1065, 30], [1495, 975, 40],
    ],
    stars: [[225, 30, 48, 15], [1476, 680, 50, 5], [1015, 855, 50, 5], [1070, 1170, 45, 45]],
    paths: [
      "M55 10Q90 30 100 75M95 0Q130 30 128 75M0 10Q25 30 40 0M320 72Q350 20 405 10L415 72M415 20Q470 20 490 50L480 75M490 40Q525 45 530 75M665 10L690 -5L750 35Q752 50 715 75L655 48Q645 38 665 10M825 0L850 15L870 0L890 15M985 10L1015 8L1020 30L1015 55Q1040 65 1050 50V25L1075 20V5M870 75Q910 40 950 70",
      "M1090 120L1118 90L1155 120L1130 160L1095 145M1275 115L1315 100L1325 145L1355 150L1325 218L1312 185L1290 180ZM1108 240Q1115 225 1130 235L1135 258M1105 270L1150 235L1190 280L1145 325L1105 295M1568 80L1545 175Q1490 170 1485 220Q1490 270 1568 290M1475 310L1530 260M1485 320L1550 275",
      "M1225 450Q1250 390 1320 355Q1370 310 1440 315Q1490 340 1480 400Q1500 500 1440 590Q1380 650 1290 630Q1200 570 1215 480ZM1480 340Q1510 400 1490 480Q1480 640 1390 645L1330 638M1350 370Q1355 390 1375 388M1395 400Q1400 415 1418 410M1355 405Q1360 430 1385 422M1285 435L1290 455L1268 450M1310 465Q1330 455 1330 470M1310 480Q1320 505 1338 490M1295 545Q1315 560 1335 545M1398 485L1375 510L1395 528",
      "M80 690Q70 600 110 508M80 690Q300 620 320 508M162 508V590L210 530L230 540L265 508M85 695L165 590M70 740Q75 720 95 720L115 742L135 730Q155 735 155 755M70 740L95 768",
      "M525 508L550 640Q560 670 590 665L1090 570Q1110 560 1108 540L1090 470M685 508Q670 600 740 635Q820 660 900 600M1000 508Q1000 560 965 580M885 508L908 608M1045 508L1060 570M535 575L445 590L565 765L1035 672Q1055 670 1050 690Q1040 702 1010 708L690 768M840 625L910 695M570 510L650 500",
      "M1085 745Q1082 735 1095 732L1240 712Q1250 712 1250 722L1260 770M1085 745L1110 880M1105 755L1230 735L1235 765M1105 755L1120 860M1390 775H1430Q1438 780 1430 800M1568 765L1475 845Q1470 860 1480 870L1568 930M1480 870L1568 950",
      "M805 1203Q840 1175 900 1190M910 1190Q960 1120 985 1130Q1000 1160 940 1180M265 1165Q270 1203 310 1203M365 1165Q370 1195 400 1200Q435 1190 430 1165M145 1190L175 1175L190 1203M490 1165Q530 1170 555 1165M690 1165L700 1203M660 1180L650 1203M730 1165Q740 1190 755 1195",
    ],
  },
];

const starPath = (r: number) => {
  const c = r * 0.22;
  return `M0 ${-r}Q${c} ${-c} ${r} 0Q${c} ${c} 0 ${r}Q${-c} ${c} ${-r} 0Q${-c} ${-c} 0 ${-r}Z`;
};

function Wallpaper() {
  return (
    <svg
      aria-hidden="true"
      className="pointer-events-none absolute inset-0 h-full w-full text-[#202629]"
      viewBox="0 0 1080 1951"
      preserveAspectRatio="xMidYMin slice"
      fill="none"
      stroke="currentColor"
      strokeWidth="2"
      strokeLinecap="round"
      strokeLinejoin="round"
    >
      {PATCHES.map((p, i) => (
        <g key={i} transform={`translate(${p.at[0]} ${p.at[1]}) scale(${p.scale[0]} ${p.scale[1]})`}>
          {p.circles.map(([x, y, r], j) => (
            <circle key={j} cx={x} cy={y} r={r} vectorEffect="non-scaling-stroke" />
          ))}
          {p.stars?.map(([x, y, r, a], j) => (
            <path key={j} d={starPath(r)} transform={`translate(${x} ${y}) rotate(${a})`} vectorEffect="non-scaling-stroke" />
          ))}
          {p.paths.map((d, j) => (
            <path key={j} d={d} vectorEffect="non-scaling-stroke" />
          ))}
        </g>
      ))}
    </svg>
  );
}

/* ------------------------------------------------------------------ */
/* Small drawings                                                      */
/* ------------------------------------------------------------------ */

function Heart({ className }: { className: string }) {
  return (
    <svg viewBox="0 0 48 44" className={className} role="img" aria-label="Red heart">
      <defs>
        <linearGradient id="heart" x1="0" y1="0" x2="0" y2="1">
          <stop offset="0" stopColor="#ff8a80" />
          <stop offset="0.25" stopColor="#ff4b4b" />
          <stop offset="0.7" stopColor="#f93a3f" />
          <stop offset="1" stopColor="#d9232b" />
        </linearGradient>
      </defs>
      <path
        fill="url(#heart)"
        d="M24 7.500C21 3 17 .5 12.500 .5C5.500 .5 0 6 0 14C0 25 10 33 21.500 42.500Q24 44.500 26.500 42.500C38 33 48 25 48 14C48 6 42.500 .5 35.500 .5C31 .5 27 3 24 7.500Z"
      />
    </svg>
  );
}

function LoveFace() {
  const heart = "M0 -3C-1.500 -7 -9 -8 -9 -1.500C-9 3 -4 6 0 9C4 6 9 3 9 -1.500C9 -8 1.500 -7 0 -3Z";
  return (
    <svg viewBox="0 0 64 64" className="size-16 shrink-0" role="img" aria-label="Smiling face with hearts">
      <defs>
        <radialGradient id="face" cx="0.5" cy="0.3" r="0.7">
          <stop offset="0" stopColor="#fff0a0" />
          <stop offset="0.45" stopColor="#ffd748" />
          <stop offset="0.8" stopColor="#fdb92c" />
          <stop offset="1" stopColor="#f08a1d" />
        </radialGradient>
        <radialGradient id="blush">
          <stop offset="0" stopColor="#ff7a2a" stopOpacity="0.85" />
          <stop offset="1" stopColor="#ff7a2a" stopOpacity="0" />
        </radialGradient>
        <linearGradient id="mini" x1="0" y1="0" x2="0" y2="1">
          <stop offset="0" stopColor="#ff5a5a" />
          <stop offset="1" stopColor="#cf1f2c" />
        </linearGradient>
      </defs>
      <circle cx="31.500" cy="33" r="30.500" fill="url(#face)" />
      <circle cx="14" cy="38" r="8" fill="url(#blush)" />
      <circle cx="49" cy="38" r="8" fill="url(#blush)" />
      <g fill="none" stroke="#7a4a12" strokeWidth="3" strokeLinecap="round">
        <path d="M15 30Q20 22 26 30M37 30Q42 22 48 30" />
        <path d="M21 43Q31.500 53 42 43" />
      </g>
      <path d={heart} transform="translate(10 16) rotate(-8)" fill="url(#mini)" />
      <path d={heart} transform="translate(53 9) rotate(8)" fill="url(#mini)" />
      <path d={heart} transform="translate(54 54) rotate(10)" fill="url(#mini)" />
    </svg>
  );
}

function Ticks() {
  return (
    <svg viewBox="0 0 46 30" className="h-[30px] w-[46px]" fill="none" stroke="#53b6e4" strokeWidth="4" strokeLinecap="round" strokeLinejoin="round" role="img" aria-label="Read">
      <path d="M2 16L11 25.500L29 2M21 22.500L24.500 25.500L43 2" />
    </svg>
  );
}

/* ------------------------------------------------------------------ */
/* Ticket picture                                                      */
/* ------------------------------------------------------------------ */

const REF_MOSAIC = ["95b6aa4c75f6f9f9ccafe", "75b58a5bcce5f9eeadaab"];

const QR_MOSAIC = [
  "8ced1b8a4143dc", "42941138691aac", "8dd5438b8c5f3c", "84596bbcb6ade7",
  "d49194dbac732e", "c59b9c6e84a52e", "a01811b2c2a079", "443a6a2983bcb7",
  "5034ea00d9bb24", "6342d89b8cb334",
];

function Mosaic({ rows, className }: { rows: string[]; className: string }) {
  return (
    <svg viewBox={`0 0 ${rows[0].length} ${rows.length}`} preserveAspectRatio="none" shapeRendering="crispEdges" className={className} aria-hidden="true">
      {rows.flatMap((row, y) =>
        Array.from(row).map((c, x) => <rect key={`${x}-${y}`} x={x} y={y} width="1" height="1" fill={`#${c}${c}${c}`} />),
      )}
    </svg>
  );
}

const QR_ROWS = [
  "111111101011001010110100100110110101111111",
  "100000101101010010011010110010100101000001",
  "101110101110111001010100101101110101011101",
  "101110101010110110110110010011010101011101",
  "101110101001101011010001011011100101011101",
  "100000101111001001101101001101110101000001",
  "111111101010101010101010101010101011111111",
  "000000001101100110110010110110110000000000",
  "111101110011011001010110011011011110111011",
  "010110010101101011011010111010010011010110",
  "110011101100110110010111001011110110011011",
  "101101011011101001101101101101001011110101",
  "110110110101011011110010110110110101101101",
];

function QrTop() {
  return (
    <svg viewBox="0 0 42 13" preserveAspectRatio="none" shapeRendering="crispEdges" className="h-[45px] w-[140px]" aria-hidden="true">
      {QR_ROWS.flatMap((row, y) =>
        Array.from(row).map((c, x) => (c === "1" ? <rect key={`${x}-${y}`} x={x} y={y} width="1" height="1" fill="#222" /> : null)),
      )}
    </svg>
  );
}

const CREST = "M0 26L-7 14Q0 6 7 14ZM-11 24L-16 10L-6 6M11 24L16 10L6 6M-25 8L-27 -6Q-22 -22 -8 -26L-5 -10L-14 -2ZM25 8L27 -6Q22 -22 8 -26L5 -10L14 -2ZM-4 -27H4L3 -8H-3Z";

function Crests() {
  const spots: [number, number][] = [];
  [30, 200, 370].forEach((y) => [61, 201, 342, 482, 622].forEach((x) => spots.push([x, y])));
  [115, 287, 457].forEach((y) => [130, 270, 411, 550].forEach((x) => spots.push([x, y])));
  return (
    <svg aria-hidden="true" className="absolute inset-0 h-full w-full opacity-60 blur-[2px]" viewBox="0 0 680 457" fill="#faf7f7">
      {spots.map(([x, y]) => (
        <g key={`${x}-${y}`} transform={`translate(${x} ${y})`}>
          <circle r="28" fill="#fefdfd" />
          <path d={CREST} />
        </g>
      ))}
    </svg>
  );
}

function Ticket() {
  return (
    <div className="relative flex flex-col overflow-hidden rounded-b-[20px] border-t border-[#c9c9c9] bg-white">
      <Crests />
      <div className="absolute -right-16 -bottom-16 h-[176px] w-[334px] rounded-tl-[100%] bg-[#8f8f8f] blur-[24px]" />
      <div className="relative mr-[26px] ml-7 mt-1.5 flex h-[282px] items-start justify-between border-y-2 border-[#e8e8e8]">
        <div className="pt-8">
          <p className="text-2xl leading-9 font-light text-[#999]">Ref No.</p>
          <div className="flex h-10 items-center gap-0.5 pt-0.5">
            <p className="text-2xl font-bold text-[#474747]">KSA000</p>
            <Mosaic rows={REF_MOSAIC} className="h-5 w-[209px]" />
          </div>
        </div>
        <div className="flex flex-col items-center pt-[29px]">
          <div className="flex w-[152px] flex-col items-center border-2 border-b-0 border-[#efefef] pt-1">
            <QrTop />
          </div>
          <div className="bg-[#eeeeee] px-[10px]">
            <Mosaic rows={QR_MOSAIC} className="h-[99px] w-[140px]" />
          </div>
          <p className="pt-0.5 pl-1 text-center text-xl leading-[33px] text-[#b0b0b0]">
            Scan For
            <br />
            Verification
          </p>
        </div>
      </div>
      <div className="h-[168px]" />
      <time className="absolute right-[18px] bottom-[10px] text-[33px] leading-10 text-white/90">13:47</time>
    </div>
  );
}

/* ------------------------------------------------------------------ */
/* Messages                                                            */
/* ------------------------------------------------------------------ */

function Tail({ side }: { side: "left" | "right" }) {
  return side === "right" ? (
    <svg aria-hidden="true" viewBox="0 0 21 31" className="absolute top-0 -right-5 h-[31px] w-[21px]" fill="#144d37">
      <path d="M0 0H16Q22 1 19 6L1 30L0 31Z" />
    </svg>
  ) : (
    <svg aria-hidden="true" viewBox="0 0 21 31" className="absolute top-0 -left-5 h-[31px] w-[21px]" fill="#1f272a">
      <path d="M21 0H5Q-1 1 2 6L20 30L21 31Z" />
    </svg>
  );
}

type BubbleProps = {
  mine?: boolean;
  tail?: boolean;
  time: string;
  quote?: ReactNode;
  reaction?: boolean;
  body?: string;
  children: ReactNode;
};

function Bubble({ mine, tail, time, quote, reaction, body = "pt-4 pb-[15px]", children }: BubbleProps) {
  const skin = mine ? "self-end bg-[#144d37] pb-2.5" : "self-start bg-[#1f272a] pb-[7px]";
  const corners = tail ? (mine ? "rounded-[30px] rounded-tr-none" : "rounded-[30px] rounded-tl-none") : "rounded-[30px]";
  return (
    <article className={`relative max-w-[871px] ${skin} ${corners}`}>
      {tail && <Tail side={mine ? "right" : "left"} />}
      {quote}
      <div className="grid">
        <div className={`col-start-1 row-start-1 px-[29px] text-[45px] leading-[53px] text-[#f7fafb] ${body}`}>{children}</div>
        <div className="col-start-1 row-start-1 flex items-center gap-3 self-end justify-self-end pr-6">
          <time className={`text-[33px] leading-10 ${mine ? "text-[#93b3a5]" : "text-[#959b9e]"}`}>{time}</time>
          {mine && <Ticks />}
        </div>
      </div>
      {reaction && (
        <button
          type="button"
          aria-label="Heart reaction"
          className={`absolute -bottom-[59px] flex h-[68px] w-20 items-center justify-center rounded-full bg-[#1f272a] pt-1 ring-3 ring-[#0a1013] ${mine ? "right-[25px]" : "left-6"}`}
        >
          <Heart className="h-11 w-12" />
        </button>
      )}
    </article>
  );
}

function Quote() {
  return (
    <blockquote className="px-[11px] pt-2.5">
      <div className="flex overflow-hidden rounded-[20px] bg-[#154232]">
        <div className="w-[11px] shrink-0 bg-[#a791ff]" />
        <div className="pt-4 pr-[25px] pb-3 pl-[19px]">
          <div className="h-[55px] w-[310px] overflow-hidden bg-[linear-gradient(90deg,#23503f,#2f5e51_55%,#3c6560_85%,#275140)]">
            <div className="flex h-full items-center gap-4 blur-[9px]">
              <div className="h-5 w-[74px] bg-[#64877f]" />
              <div className="h-5 w-[52px] bg-[#64877f]" />
              <div className="-ml-4 h-6 w-7 bg-[#98a6b3]" />
              <div className="ml-6 h-7 w-9 bg-[#8e9fac]" />
              <div className="-ml-3 h-7 w-9 bg-[#8e9fac]" />
            </div>
          </div>
          <p className="pl-[3px] text-[39px] leading-[51px] whitespace-nowrap text-[#92b1a3]">Can you please send them to my hotel?</p>
        </div>
      </div>
    </blockquote>
  );
}

/* ------------------------------------------------------------------ */
/* Composer                                                            */
/* ------------------------------------------------------------------ */

function Composer() {
  return (
    <footer className="flex items-start gap-[25px] pr-[26px] pb-[13px] pl-[25px]">
      <div className="mt-[5px] flex h-[132px] flex-1 items-center rounded-full bg-[#1f272a] pr-[35px] pl-[37px]">
        <button type="button" aria-label="Stickers" className="shrink-0">
          <svg viewBox="0 0 58 58" className="size-[58px]" fill="none" stroke="#8b9497" strokeWidth="5.500" strokeLinejoin="round">
            <path d="M22 3H36Q55 3 55 22V33L33 55H22Q3 55 3 36V22Q3 3 22 3Z" />
            <path d="M31 55Q32 46 34 39Q36 32 44 32H55" />
            <path d="M15 33H33Q30 37 30 43Q18 43 15 33Z" fill="#8b9497" stroke="none" />
            <circle cx="19" cy="20" r="4.500" fill="#8b9497" stroke="none" />
            <circle cx="39" cy="20" r="4.500" fill="#8b9497" stroke="none" />
          </svg>
        </button>
        <div className="relative ml-[38px] min-w-0 flex-1">
          <span className="absolute top-1/2 left-0 h-[68px] w-1.5 -translate-y-1/2 bg-[#27bf68]" />
          <input
            type="text"
            aria-label="Message"
            placeholder="Message"
            className="relative w-full bg-transparent pt-1 text-[51px] text-white outline-none placeholder:text-[#858e91]"
          />
        </div>
        <button type="button" aria-label="Attach" className="shrink-0">
          <svg viewBox="0 0 37 58" className="h-[58px] w-[37px]" fill="none" stroke="#8b9497" strokeWidth="5" strokeLinecap="round">
            <path d="M34 15V39Q34 55.500 18.500 55.500Q3 55.500 3 39V14Q3 2.500 14 2.500Q24.500 2.500 24.500 14V38Q24.500 44.500 18.500 44.500Q13 44.500 13 38V16" />
          </svg>
        </button>
        <button type="button" aria-label="Camera" className="ml-[89px] shrink-0">
          <svg viewBox="0 0 58 53" className="h-[53px] w-[58px]" fill="none" stroke="#8b9497" strokeWidth="5.500" strokeLinejoin="round">
            <path d="M3 9H16L22 3H36L42 9H55V50H3Z" />
            <circle cx="29" cy="29.500" r="10.500" />
          </svg>
        </button>
      </div>
      <button type="button" aria-label="Record voice message" className="flex size-[135px] shrink-0 items-center justify-center rounded-full bg-[#23c264]">
        <svg viewBox="0 0 40 54" className="h-[54px] w-10" fill="none" stroke="#06130d" strokeWidth="5.500" strokeLinecap="round">
          <rect x="11" y="0" width="18" height="34" rx="9" fill="#06130d" stroke="none" />
          <path d="M3 29Q5 42 20 42.500Q35 42 37 29M20 43V51" />
        </svg>
      </button>
    </footer>
  );
}

export default function App() {
  return (
    <div className="relative flex min-h-screen flex-col overflow-hidden bg-[#0a0f14] font-[Roboto,sans-serif]">
      <Wallpaper />
      <main className="relative flex flex-1 flex-col gap-[7px] px-12 pb-[82px]">
        <article className="w-[702px] max-w-full rounded-b-[30px] bg-[#1f272a] px-[11px] pb-[11px]">
          <Ticket />
        </article>
        <Bubble time="13:47" body="pt-4 pb-[61px]">
          Can you please send them to my hotel?
        </Bubble>
        <Bubble time="15:19" body="pt-4 pb-[15px] pr-[147px]">
          Hello?
        </Bubble>
        <div className="h-[15px]" />
        <Bubble mine tail time="15:20" quote={<Quote />} body="pt-[18px] pb-3">
          Yes
        </Bubble>
        <Bubble mine time="15:20" reaction body="flex items-center pt-[21px] pb-[18px] pr-[190px]">
          <span>Thanks for the order</span>
          <LoveFace />
        </Bubble>
        <div className="h-[77px]" />
        <Bubble tail time="17:00" body="pt-4 pb-[61px]">
          What time do you think I shall receive it ?
        </Bubble>
        <div className="h-[15px]" />
        <Bubble mine tail time="17:03" body="pt-4 pb-[61px]">
          I can write to you as soon as it is delivered,2-3 hours after it is sent.
        </Bubble>
        <div className="h-[15px]" />
        <Bubble tail time="18:51" reaction>
          I received them many thanks for the fast delivery
        </Bubble>
      </main>
      <div className="relative">
        <Composer />
        <button type="button" aria-label="Open chat widget" className="absolute -right-12 -bottom-12 size-24 rounded-full bg-[#1a7cf5]">
          <svg viewBox="0 0 28 28" className="absolute top-[15px] left-[14px] size-7">
            <rect x="7" y="0" width="21" height="18" rx="8" fill="#8fbdfa" />
            <path d="M9 7H14Q22 7 22 16Q22 24 14 25H9L4 28L4 25Q0 22 0 16Q0 7 9 7Z" fill="#fff" />
          </svg>
        </button>
      </div>
    </div>
  );
}
